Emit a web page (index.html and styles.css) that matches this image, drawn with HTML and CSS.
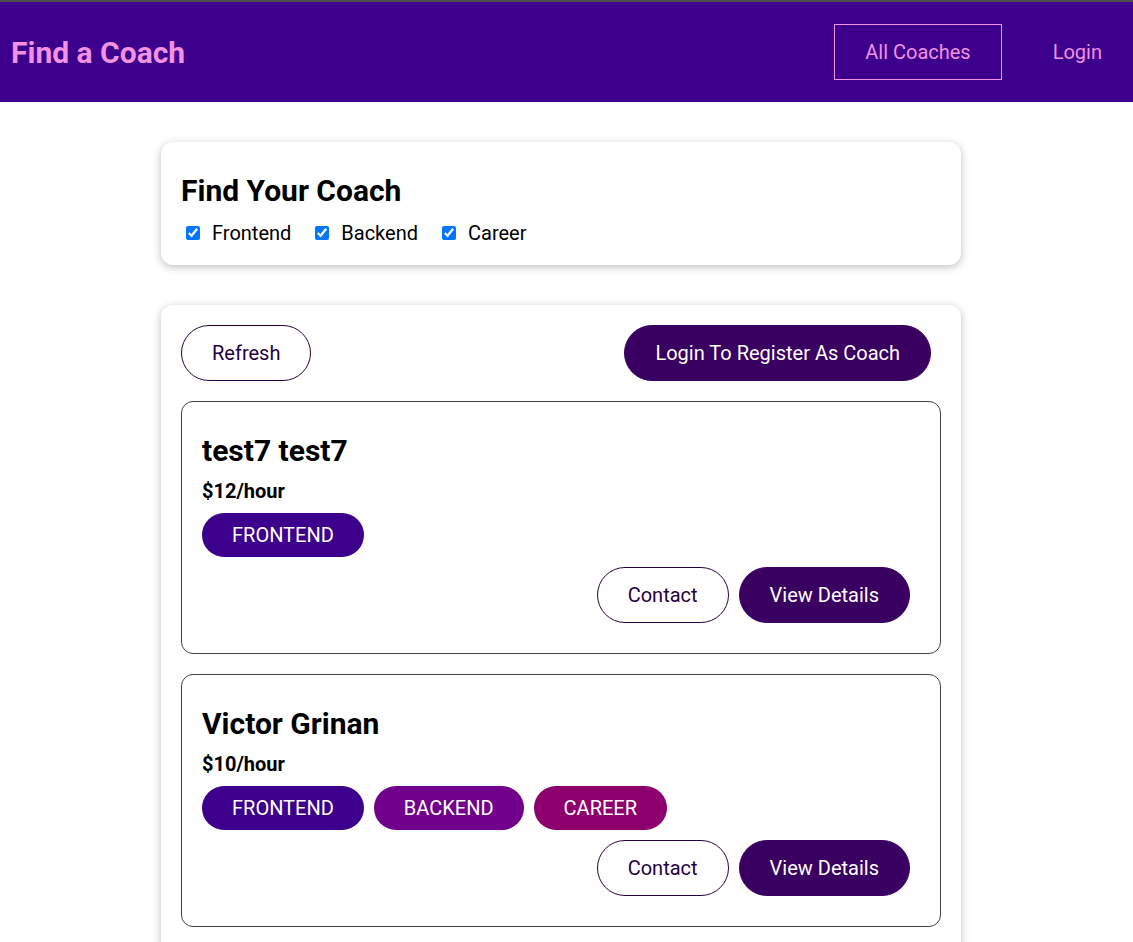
FILE: index.html
```html
<!DOCTYPE html>
<html lang="en">
<head>
<meta charset="utf-8">
<title>Find a Coach</title>
<link rel="stylesheet" href="styles.css">
</head>
<body>
<header class="site-header">
  <nav class="nav">
    <h1 class="brand"><a href="#">Find a Coach</a></h1>
    <ul class="nav-links">
      <li><a href="#" class="nav-link active">All Coaches</a></li>
      <li><a href="#" class="nav-link">Login</a></li>
    </ul>
  </nav>
</header>
<main class="page">
  <section class="card filter-card">
    <h2 class="filter-title">Find Your Coach</h2>
    <div class="filter-options">
      <span class="filter-option"><input type="checkbox" id="frontend" checked><label for="frontend">Frontend</label></span>
      <span class="filter-option"><input type="checkbox" id="backend" checked><label for="backend">Backend</label></span>
      <span class="filter-option"><input type="checkbox" id="career" checked><label for="career">Career</label></span>
    </div>
  </section>
  <section class="card">
    <div class="controls">
      <button class="btn btn-outline">Refresh</button>
      <a href="#" class="btn">Login To Register As Coach</a>
    </div>
    <ul class="coach-list">
      <li class="coach-item">
        <h3 class="coach-name">test7 test7</h3>
        <h4 class="coach-rate">$12/hour</h4>
        <div class="badges">
          <span class="badge frontend">FRONTEND</span>
        </div>
        <div class="actions">
          <a href="#" class="btn btn-outline">Contact</a>
          <a href="#" class="btn">View Details</a>
        </div>
      </li>
      <li class="coach-item">
        <h3 class="coach-name">Victor Grinan</h3>
        <h4 class="coach-rate">$10/hour</h4>
        <div class="badges">
          <span class="badge frontend">FRONTEND</span>
          <span class="badge backend">BACKEND</span>
          <span class="badge career">CAREER</span>
        </div>
        <div class="actions">
          <a href="#" class="btn btn-outline">Contact</a>
          <a href="#" class="btn">View Details</a>
        </div>
      </li>
    </ul>
  </section>
</main>
</body>
</html>
```

FILE: styles.css
```css
* {
  box-sizing: border-box;
}

html {
  font-family: Roboto, "Noto Sans", sans-serif;
  font-size: 20px;
}

body {
  margin: 0;
  border-top: 2px solid #4f4f4f;
}

.site-header {
  height: 100px;
  background-color: #3d008d;
  display: flex;
  align-items: center;
  padding: 0 0 0 11px;
}

.nav {
  width: 100%;
  display: flex;
  justify-content: space-between;
  align-items: center;
}

.brand {
  margin: 0;
  font-size: 30px;
  font-weight: 700;
}

.brand a {
  color: #f391e3;
  text-decoration: none;
}

.nav-links {
  list-style: none;
  margin: 0;
  padding: 0;
  display: flex;
  align-items: center;
}

.nav-links li {
  margin: 0 0 0 20px;
}

.nav-link {
  display: inline-block;
  padding: 15px 30px;
  color: #f391e3;
  text-decoration: none;
  border: 1px solid transparent;
  font-size: 20px;
}

.nav-link.active {
  border-color: #f391e3;
}

.page {
  padding: 40px 11px 40px 0;
}

.card {
  max-width: 800px;
  margin: 0 auto 40px;
  padding: 20px;
  border-radius: 12px;
  background: #fff;
  box-shadow: 0 2px 8px rgba(0, 0, 0, 0.26);
}

.filter-title {
  margin: 11px 0 13px;
  font-size: 30px;
  font-weight: 700;
  color: #000;
}

.filter-options {
  display: flex;
  align-items: center;
  min-height: 24px;
}

.filter-option {
  display: flex;
  align-items: center;
  margin-right: 19px;
  font-size: 20px;
}

.filter-option input {
  width: 14px;
  height: 14px;
  margin: 0 0 0 5px;
}

.filter-option label {
  margin-left: 12px;
}

.controls {
  display: flex;
  justify-content: space-between;
}

.btn {
  display: inline-block;
  text-decoration: none;
  padding: 15px 30px;
  font: inherit;
  font-size: 20px;
  line-height: normal;
  background-color: #3a0061;
  border: 1px solid #3a0061;
  color: #fff;
  border-radius: 30px;
  margin-right: 10px;
  cursor: pointer;
}

.btn-outline {
  background-color: transparent;
  border-color: #270041;
  color: #270041;
}

.coach-list {
  list-style: none;
  margin: 0;
  padding: 0;
}

.coach-item {
  margin: 20px 0;
  border: 1px solid #424242;
  border-radius: 12px;
  padding: 20px;
}

.coach-name {
  margin: 11px 0 11px;
  font-size: 30px;
  font-weight: 700;
}

.coach-rate {
  margin: 10px 0;
  font-size: 20px;
  font-weight: 700;
}

.badges {
  display: flex;
}

.badge {
  display: inline-block;
  padding: 10px 30px;
  margin-right: 10px;
  border-radius: 30px;
  font-size: 20px;
  color: #fff;
}

.badge.frontend {
  background-color: #3d008d;
}

.badge.backend {
  background-color: #71008d;
}

.badge.career {
  background-color: #8d006e;
}

.actions {
  display: flex;
  justify-content: flex-end;
  padding: 10px 0 10px;
}
```
